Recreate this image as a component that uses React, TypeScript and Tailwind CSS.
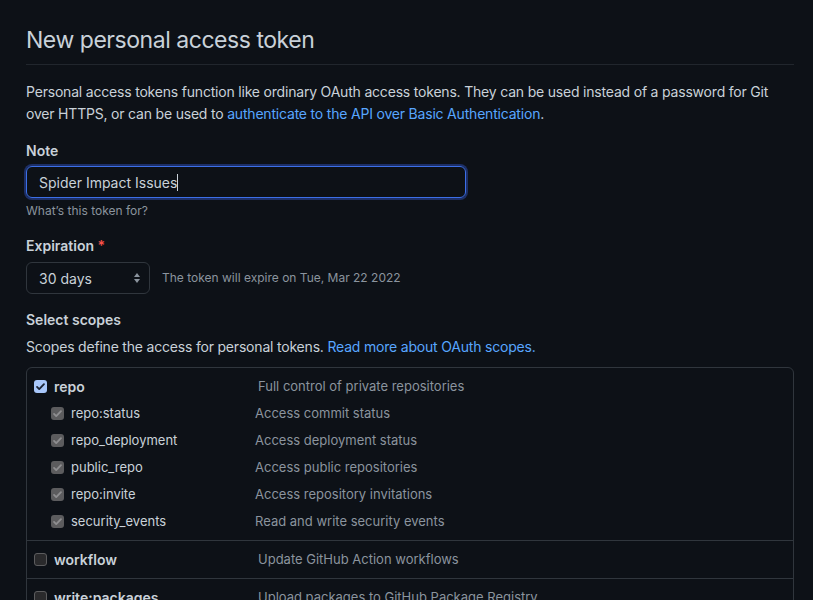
const font = "font-['Inter','Liberation_Sans',sans-serif]"

type Scope = { name: string; desc: string }

const repoScopes: Scope[] = [
  { name: 'repo:status', desc: 'Access commit status' },
  { name: 'repo_deployment', desc: 'Access deployment status' },
  { name: 'public_repo', desc: 'Access public repositories' },
  { name: 'repo:invite', desc: 'Access repository invitations' },
  { name: 'security_events', desc: 'Read and write security events' },
]

function Check({ color }: { color: string }) {
  return (
    <svg width="11" height="11" viewBox="0 0 12 12" fill="none">
      <path d="M2.2 6.4l2.4 2.4L9.8 3.4" stroke={color} strokeWidth="2" strokeLinecap="round" strokeLinejoin="round" />
    </svg>
  )
}

function Box({ state }: { state: 'on' | 'disabled' | 'off' }) {
  if (state === 'on')
    return (
      <span className="w-[13px] h-[13px] rounded-[3px] bg-[#a8c7fa] flex items-center justify-center shrink-0">
        <Check color="#1b2434" />
      </span>
    )
  if (state === 'disabled')
    return (
      <span className="w-[13px] h-[13px] rounded-[3px] bg-[#5c5c5e] flex items-center justify-center shrink-0">
        <Check color="#8e8e90" />
      </span>
    )
  return <span className="w-[13px] h-[13px] rounded-[3px] bg-[#2a2a2c] border border-[#5c5c5e] shrink-0" />
}

export default function App() {
  return (
    <div className={`${font} min-h-[600px] h-[600px] overflow-hidden bg-[#0d1117] text-[#c9d1d9] text-[14px] pl-[26px] pr-[19px] pt-[25px]`}>
      {/* header */}
      <div className="border-b border-[#21262d] pb-[9px]">
        <h1 className="text-[23px] leading-[30px] font-normal tracking-[-0.02em] text-[#c9d1d9]">New personal access token</h1>
      </div>

      <p className="mt-[16px] leading-[22px] tracking-[-0.014em]">
        Personal access tokens function like ordinary OAuth access tokens. They can be used instead of a password for Git
        over HTTPS, or can be used to <span className="text-[#58a6ff]">authenticate to the API over Basic Authentication</span>.
      </p>

      {/* Note */}
      <div className="mt-[15px] font-semibold leading-[21px]">Note</div>
      <div className="mt-[5px] w-[440px] h-[32px] rounded-[6px] border border-[#3c6fe8] shadow-[0_0_0_2px_#1d2f66] flex items-center px-[12px]">
        <span>Spider Impact Issues</span>
        <span className="w-px h-[17px] bg-[#c9d1d9]" />
      </div>
      <div className="mt-[4px] text-[12px] leading-[18px] text-[#8b949e]">What’s this token for?</div>

      {/* Expiration */}
      <div className="mt-[15px] font-semibold leading-[21px]">
        Expiration <span className="text-[#f85149]">*</span>
      </div>
      <div className="mt-[6px] flex items-center gap-[12px]">
        <div className="w-[124px] h-[32px] rounded-[6px] border border-[#30363d] flex items-center justify-between pl-[12px] pr-[8px]">
          <span>30 days</span>
          <svg width="8" height="12" viewBox="0 0 8 12" fill="#8b949e">
            <path d="M4 1l3 4H1z" />
            <path d="M4 11l3-4H1z" />
          </svg>
        </div>
        <span className="text-[12px] text-[#8b949e]">The token will expire on Tue, Mar 22 2022</span>
      </div>

      {/* Scopes */}
      <div className="mt-[15px] font-semibold leading-[21px]">Select scopes</div>
      <p className="mt-[6px] leading-[21px] tracking-[-0.014em]">
        Scopes define the access for personal tokens. <span className="text-[#58a6ff]">Read more about OAuth scopes.</span>
      </p>

      <div className="mt-[10px] border border-[#30363d] rounded-[6px]">
        <div className="py-[5px]">
          <div className="h-[27px] flex items-center pl-[7px]">
            <div className="w-[224px] flex items-center gap-[7px]">
              <Box state="on" />
              <span className="font-semibold">repo</span>
            </div>
            <span className="text-[#8b949e] text-[13px]">Full control of private repositories</span>
          </div>
          {repoScopes.map((s) => (
            <div key={s.name} className="h-[27px] flex items-center pl-[24px]">
              <div className="w-[204px] flex items-center gap-[7px]">
                <Box state="disabled" />
                <span className="text-[13px]">{s.name}</span>
              </div>
              <span className="text-[#8b949e] text-[13px]">{s.desc}</span>
            </div>
          ))}
        </div>
        <div className="h-[38px] border-t border-[#30363d] flex items-center pl-[7px]">
          <div className="w-[224px] flex items-center gap-[7px]">
            <Box state="off" />
            <span className="font-semibold">workflow</span>
          </div>
          <span className="text-[#8b949e] text-[13px]">Update GitHub Action workflows</span>
        </div>
        <div className="h-[38px] border-t border-[#30363d] flex items-center pl-[7px]">
          <div className="w-[224px] flex items-center gap-[7px]">
            <Box state="off" />
            <span className="font-semibold">write:packages</span>
          </div>
          <span className="text-[#8b949e] text-[13px]">Upload packages to GitHub Package Registry</span>
        </div>
      </div>
    </div>
  )
}
